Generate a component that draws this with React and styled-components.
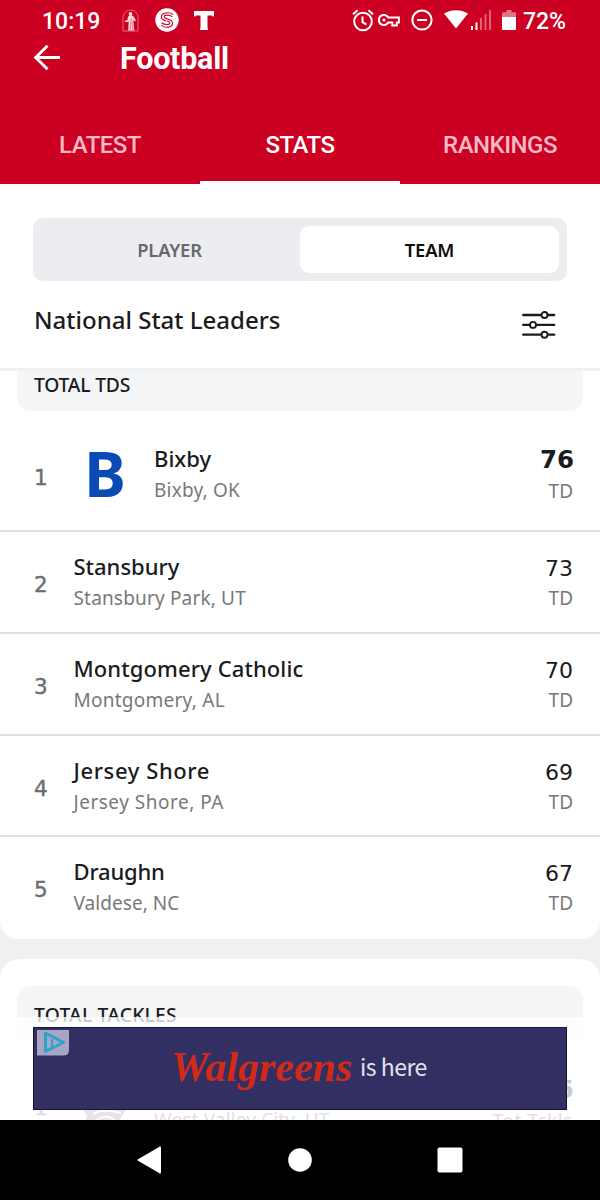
import React from "react";
import styled, { createGlobalStyle } from "styled-components";

const GlobalStyle = createGlobalStyle`
  * { box-sizing: border-box; }
  body { margin: 0; background: #f0f0f0; }
`;

const Screen = styled.div`
  position: relative;
  width: 600px;
  height: 1200px;
  overflow: hidden;
  display: flex;
  flex-direction: column;
  background: #f0f0f0;
  font-family: "Noto Sans", sans-serif;
  color: #1a1b1d;
`;

const Header = styled.header`
  height: 184px;
  flex: none;
  background: #cc0022;
  color: #fff;
  font-family: Roboto, sans-serif;
  display: flex;
  flex-direction: column;
`;

const StatusBar = styled.div`
  height: 40px;
  display: flex;
  justify-content: space-between;
  padding: 0 34px 0 42px;
`;

const StatusText = styled.span`
  font-size: 23px;
  line-height: 43px;
  font-weight: 500;
  margin-left: ${(p) => p.$gap || 0}px;
`;

const StatusGroup = styled.div`
  display: flex;
  align-items: flex-start;
`;

const StatusIcon = styled.svg`
  display: block;
  flex: none;
  margin-left: ${(p) => p.$gap || 0}px;
  margin-top: ${(p) => p.$top || 0}px;
`;

const TitleRow = styled.div`
  height: 66px;
  display: flex;
  padding-left: 33px;
`;

const BackIcon = styled.svg`
  margin-top: 4px;
  flex: none;
`;

const Title = styled.h1`
  margin: 0 0 0 60px;
  font-size: 30.5px;
  line-height: 38px;
  font-weight: 700;
  letter-spacing: -0.25px;
`;

const Tabs = styled.nav`
  flex: 1;
  display: grid;
  grid-template-columns: repeat(3, 1fr);
`;

const Tab = styled.div`
  text-align: center;
  font-size: 24px;
  line-height: 72px;
  font-weight: 500;
  letter-spacing: -0.5px;
  padding-top: 6px;
  color: ${(p) => (p.$active ? "#fff" : "#f8b9c4")};
  border-bottom: 3px solid ${(p) => (p.$active ? "#fff" : "transparent")};
`;

const Controls = styled.section`
  height: 187px;
  flex: none;
  background: #fff;
  padding: 33.5px 33px 0;
  border-bottom: 3px solid #f0f0f0;
`;

const Segmented = styled.div`
  height: 63px;
  padding: 8px;
  border-radius: 10px;
  background: #ecedf1;
  display: grid;
  grid-template-columns: 1fr 1fr;
`;

const Segment = styled.div`
  height: 47px;
  border-radius: 9px;
  text-align: center;
  font-size: 18.4px;
  line-height: 48px;
  font-weight: 600;
  letter-spacing: -0.2px;
  padding-right: ${(p) => (p.$active ? 0 : 2)}px;
  color: ${(p) => (p.$active ? "#0c0c0e" : "#68696c")};
  background: ${(p) => (p.$active ? "#fff" : "transparent")};
`;

const HeadingRow = styled.div`
  display: flex;
  justify-content: space-between;
  padding: 21px 11px 0 1px;
`;

const Heading = styled.h2`
  margin: 0;
  font-size: 24px;
  line-height: 36px;
  font-weight: 500;
`;

const FilterIcon = styled.svg`
  margin-top: 8px;
`;

const Card = styled.section`
  flex: none;
  background: #fff;
  height: ${(p) => p.$height}px;
  margin-bottom: 20px;
  border-radius: ${(p) => (p.$continued ? "0 0 18px 18px" : "20px 20px 0 0")};
  padding-top: ${(p) => (p.$continued ? 0 : 27)}px;
  overflow: hidden;
`;

const CardTitle = styled.h3`
  margin: 0 17px;
  height: ${(p) => (p.$continued ? 40 : 54)}px;
  border-radius: ${(p) => (p.$continued ? "0 0 14px 14px" : "14px")};
  padding: ${(p) => (p.$continued ? 0 : 15)}px 17px 0;
  background: #f4f5f7;
  font-size: 19.3px;
  line-height: 27px;
  font-weight: 500;
  letter-spacing: ${(p) => (p.$continued ? -0.2 : 0.2)}px;
`;

const Row = styled.div`
  height: ${(p) => p.$height}px;
  padding: ${(p) => p.$top}px 27px 0 34px;
  display: flex;
  border-bottom: 2px solid ${(p) => (p.$last ? "transparent" : "#e0e0e1")};
`;

const Rank = styled.div`
  width: ${(p) => (p.$lead ? 50 : 39.5)}px;
  padding-top: ${(p) => (p.$lead ? 17 : 16)}px;
  font-family: "DejaVu Sans", sans-serif;
  font-size: 21.5px;
  line-height: 36px;
  -webkit-text-stroke: 0.4px #6b6c6e;
  color: #6b6c6e;
`;

const TeamMark = styled.div`
  width: 70px;
  padding-top: 0;
  font-size: 63px;
  line-height: 60px;
  font-weight: 700;
  color: #0a4ab4;
`;

const TeamInfo = styled.div`
  flex: 1;
  padding-top: ${(p) => p.$offset || 0}px;
`;

const TeamName = styled.div`
  font-size: 22px;
  line-height: 31px;
  font-weight: 500;
  letter-spacing: ${(p) => p.$tracking || 0}px;
`;

const TeamPlace = styled.div`
  font-size: 19px;
  line-height: 33px;
  color: #77787a;
  letter-spacing: ${(p) => p.$tracking || 0}px;
`;

const Stat = styled.div`
  text-align: right;
`;

const StatValue = styled.div`
  font-family: "DejaVu Sans", sans-serif;
  font-size: ${(p) => (p.$lead ? 24.5 : 22)}px;
  line-height: 32px;
  padding-top: ${(p) => (p.$lead ? 1 : 2)}px;
  font-weight: ${(p) => (p.$lead ? 700 : 400)};
  margin-right: ${(p) => (p.$lead ? -1 : 0)}px;
`;

const StatUnit = styled.div`
  font-size: 19px;
  line-height: ${(p) => (p.$lead ? 30 : 27)}px;
  color: #77787a;
  letter-spacing: ${(p) => p.$tracking || 0}px;
`;

const HelmetIcon = styled.svg`
  flex: none;
  margin-right: 22px;
`;

const AdOverlay = styled.aside`
  position: absolute;
  left: 0;
  top: 1017px;
  width: 600px;
  height: 103px;
  padding: 10px 33px;
  background: rgba(255, 255, 255, 0.77);
`;

const AdBanner = styled.div`
  position: relative;
  height: 83px;
  border: 1px solid #17163a;
  background: #322f62;
  display: flex;
  padding-left: 137px;
`;

const AdBadge = styled.svg`
  position: absolute;
  left: 3px;
  top: 2px;
`;

const AdBrand = styled.span`
  font-family: "Liberation Serif", serif;
  font-style: italic;
  font-weight: 700;
  font-size: 42px;
  line-height: 78px;
  color: #d02a18;
  width: 189px;
`;

const AdText = styled.span`
  font-family: "Noto Sans CJK SC", "Noto Sans", sans-serif;
  font-size: 23px;
  line-height: 77px;
  letter-spacing: -0.5px;
  color: #e3e2f1;
`;

const NavBar = styled.footer`
  position: absolute;
  left: 0;
  bottom: 0;
  width: 600px;
  height: 80px;
  background: #000;
  display: grid;
  grid-template-columns: 150px 150px 150px;
  justify-content: center;
  align-items: center;
  justify-items: center;
`;

const teams = [
  { name: "Stansbury", place: "Stansbury Park, UT", value: 73, height: 102, placeTracking: 0.17 },
  { name: "Montgomery Catholic", place: "Montgomery, AL", value: 70, height: 102, tracking: 0.1, placeTracking: 0.25 },
  { name: "Jersey Shore", place: "Jersey Shore, PA", value: 69, height: 101, tracking: 0.6, placeTracking: 0.5 },
  { name: "Draughn", place: "Valdese, NC", value: 67, height: 102, tracking: -0.2, placeTracking: 0.05 },
];

function StatusIcons() {
  return (
    <StatusGroup>
      <StatusIcon $top={9} width="22" height="23" viewBox="0 0 22 23" fill="none" stroke="#fff" strokeWidth="2">
        <circle cx="11" cy="12.5" r="8.8" />
        <path d="M10.5 7.5v5.7l4 2.4M1 5.2l4.6-3.9M21 5.2l-4.6-3.9" />
      </StatusIcon>
      <StatusIcon $gap={4} $top={13} width="22" height="15" viewBox="0 0 22 15" fill="none" stroke="#fff" strokeWidth="2">
        <path d="M10.2 4.6H20.9V9.4H18.8V12.4H14.3V9.4H10.2A5 5 0 1 1 10.2 4.6Z" />
        <circle cx="6" cy="7" r="1.6" fill="#fff" stroke="none" />
      </StatusIcon>
      <StatusIcon $gap={11} $top={9} width="22" height="22" viewBox="0 0 22 22" fill="none" stroke="#fff" strokeWidth="2">
        <circle cx="11" cy="11" r="9.6" />
        <path d="M6 11h10" />
      </StatusIcon>
      <StatusIcon $gap={11} $top={10} width="24" height="19" viewBox="0 0 24 19">
        <path d="M0 3.5C7-1 17-1 24 3.5L12 18.5Z" fill="#fff" />
      </StatusIcon>
      <StatusIcon $gap={3} $top={10} width="21" height="20" viewBox="0 0 21 20" fill="#fff">
        <path d="M0 16h2v4H0zM4.5 12.5h2V20h-2z" />
        <path opacity=".38" d="M9 8h2v12H9zM13.5 4h2v16h-2zM18 0h2v20h-2z" />
      </StatusIcon>
      <StatusIcon $gap={10} $top={10} width="14" height="20" viewBox="0 0 14 20" fill="#fff">
        <path opacity=".45" d="M1 2.2h3.5V0h5v2.2H13q1 0 1 1V7H0V3.2q0-1 1-1Z" />
        <path d="M0 7h14v12q0 1-1 1H1q-1 0-1-1Z" />
      </StatusIcon>
      <StatusText $gap={7}>72%</StatusText>
    </StatusGroup>
  );
}

function AppIcons() {
  return (
    <>
      <StatusIcon $gap={22} $top={9} width="17" height="23" viewBox="0 0 17 23">
        <path d="M1 22V8.5a7.5 7.5 0 0 1 15 0V22Z" fill="none" stroke="#e8667c" strokeWidth="1" />
        <path d="M8.5 3a1.8 1.8 0 0 1 1.2 3.2l2.2 1.6 2 3.6-.8.9-1.7-1.3.9 10.5H6.2l.5-9-1.8.7-2.1-.5.3-1L5.4 11l.6-3.3 1.5-1.4A1.8 1.8 0 0 1 8.5 3Z" fill="#fbd8de" />
        <path d="M9.4 9.5 8 21M10.8 13l.1 8" stroke="#cc0022" strokeWidth=".5" />
      </StatusIcon>
      <StatusIcon $gap={16} $top={8} width="24" height="24" viewBox="0 0 24 24" fill="none">
        <circle cx="12" cy="12" r="11.7" fill="#fff" />
        <path d="M17.5 6.3C14.5 3.7 6.3 4.4 6.3 8.8c0 2.3 1.8 3.2 4.2 3.9M17 8.6c-2.6-2-7.8-2-7.8.2 0 2.6 8.4 2 8.4 6.4 0 4.6-7.6 5-11 2.4M6.8 15c2.8 2.2 8 2 8-.1 0-1-1.2-1.5-2.6-1.9" stroke="#cc0022" strokeWidth="1.1" strokeLinecap="round" />
      </StatusIcon>
      <StatusIcon $gap={15} $top={11} width="20" height="19" viewBox="0 0 20 19">
        <path d="M0 0h20v5.4h-1.2L18 4.6h-4.5V17l.5.6V19H6v-1.4l.5-.6V4.6H2l-.8.8H0Z" fill="#fff" />
      </StatusIcon>
    </>
  );
}

export default function App() {
  return (
    <Screen>
      <GlobalStyle />
      <Header>
        <StatusBar>
          <StatusGroup>
            <StatusText>10:19</StatusText>
            <AppIcons />
          </StatusGroup>
          <StatusIcons />
        </StatusBar>
        <TitleRow>
          <BackIcon width="27" height="27" viewBox="0 0 27 27" fill="none" stroke="#fff" strokeWidth="2.9">
            <path d="M27 13.5H3M14.5 1.7 2.7 13.5l11.8 11.8" />
          </BackIcon>
          <Title>Football</Title>
        </TitleRow>
        <Tabs>
          <Tab>LATEST</Tab>
          <Tab $active>STATS</Tab>
          <Tab>RANKINGS</Tab>
        </Tabs>
      </Header>

      <Controls>
        <Segmented>
          <Segment>PLAYER</Segment>
          <Segment $active>TEAM</Segment>
        </Segmented>
        <HeadingRow>
          <Heading>National Stat Leaders</Heading>
          <FilterIcon width="34" height="30" viewBox="0 0 34 30" fill="#fff" stroke="#1a1b1d" strokeWidth="2.3" strokeLinecap="round">
            <path d="M1.2 5h31M1.2 14.9h31M1.2 24.7h31" />
            <circle cx="22.5" cy="5" r="3" strokeWidth="1.9" />
            <circle cx="11" cy="14.9" r="3" strokeWidth="1.9" />
            <circle cx="22.5" cy="24.7" r="3" strokeWidth="1.9" />
          </FilterIcon>
        </HeadingRow>
      </Controls>

      <Card $continued $height={568}>
        <CardTitle $continued>TOTAL TDS</CardTitle>
        <Row $height={121} $top={32}>
          <Rank $lead>1</Rank>
          <TeamMark>B</TeamMark>
          <TeamInfo>
            <TeamName>Bixby</TeamName>
            <TeamPlace $tracking={0.2}>Bixby, OK</TeamPlace>
          </TeamInfo>
          <Stat>
            <StatValue $lead>76</StatValue>
            <StatUnit $lead>TD</StatUnit>
          </Stat>
        </Row>
        {teams.map((team, i) => (
          <Row key={team.name} $height={team.height} $top={19} $last={i === teams.length - 1}>
            <Rank>{i + 2}</Rank>
            <TeamInfo>
              <TeamName $tracking={team.tracking}>{team.name}</TeamName>
              <TeamPlace $tracking={team.placeTracking}>{team.place}</TeamPlace>
            </TeamInfo>
            <Stat>
              <StatValue>{team.value}</StatValue>
              <StatUnit>TD</StatUnit>
            </Stat>
          </Row>
        ))}
      </Card>

      <Card $height={200}>
        <CardTitle>TOTAL TACKLES</CardTitle>
        <Row $height={122} $top={33}>
          <Rank $lead>1</Rank>
          <HelmetIcon width="48" height="60" viewBox="0 0 48 60">
            <path d="M-6 34 3 36l1-3 6 2C20 31 34 35 42 37l-5 7-4 12-6-3C20 47 11 49 6 57L1 50l2-8Z" fill="#92939b" />
            <path d="M9 41c9-5 19-3 28-1M10 50c6-8 16-8 22-1" fill="none" stroke="#fff" strokeWidth="2" />
          </HelmetIcon>
          <TeamInfo $offset={31}>
            <TeamPlace $tracking={0.15}>West Valley City, UT</TeamPlace>
          </TeamInfo>
          <Stat>
            <StatValue $lead>5</StatValue>
            <StatUnit $lead $tracking={0.6}>Tot Tckls</StatUnit>
          </Stat>
        </Row>
      </Card>

      <AdOverlay>
        <AdBanner>
          <AdBadge width="33" height="26" viewBox="0 0 33 26">
            <path d="M0 0h32v20q0 5.5-5.5 5.5H0Z" fill="#aaa5c5" />
            <path d="M8.5 3v18.5L26.5 12.5Z" fill="none" stroke="#28a5c7" strokeWidth="3" strokeLinejoin="round" />
            <path d="M15 9v8" stroke="#28a5c7" strokeWidth="2.2" />
          </AdBadge>
          <AdBrand>Walgreens</AdBrand>
          <AdText>is here</AdText>
        </AdBanner>
      </AdOverlay>

      <NavBar>
        <svg width="26" height="28" viewBox="0 0 26 28">
          <path d="M23 1.5v25L1.5 14Z" fill="#fff" stroke="#fff" strokeWidth="2" strokeLinejoin="round" />
        </svg>
        <svg width="24" height="24" viewBox="0 0 24 24">
          <circle cx="12" cy="12" r="11.8" fill="#fff" />
        </svg>
        <svg width="26" height="26" viewBox="0 0 26 26">
          <rect x=".5" y=".5" width="25" height="25" rx="2" fill="#fff" />
        </svg>
      </NavBar>
    </Screen>
  );
}
